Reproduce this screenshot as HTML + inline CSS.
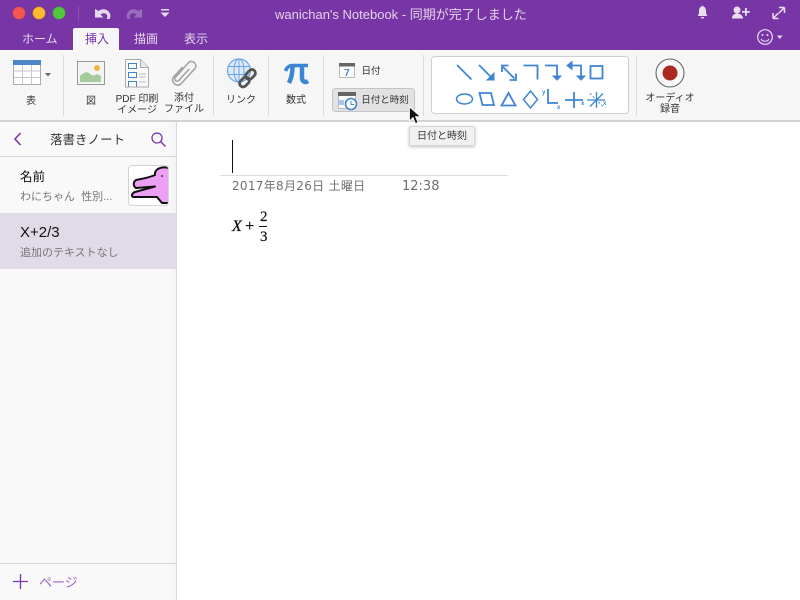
<!DOCTYPE html>
<html><head><meta charset="utf-8"><style>
html,body{margin:0;padding:0;width:800px;height:600px;overflow:hidden;background:#fff;font-family:"Liberation Sans","Noto Sans CJK JP",sans-serif}
.a{position:absolute;white-space:nowrap}
.c{position:absolute;text-align:center;font-size:10px;line-height:12px;color:#333;white-space:nowrap;transform:translateX(-50%)}
.sep{position:absolute;top:55px;height:61px;width:1px;background:#dcdcdc}
.tab{position:absolute;top:31px;font-size:12px;color:#e6d8ee;line-height:16px}
</style></head><body>
<div class="a" style="left:0;top:0;width:800px;height:50px;background:#7735a5"></div>
<div class="a" style="left:0;top:50px;width:800px;height:70px;background:#f6f6f6;border-bottom:2px solid #d2d2d2"></div>
<!-- traffic -->
<div class="a" style="left:13px;top:7px;width:12px;height:12px;border-radius:50%;background:#f4574f;box-shadow:0 0 0 .5px #b53a6a"></div>
<div class="a" style="left:33px;top:7px;width:12px;height:12px;border-radius:50%;background:#fbbb2d;box-shadow:0 0 0 .5px #b5703a"></div>
<div class="a" style="left:53px;top:7px;width:12px;height:12px;border-radius:50%;background:#4fc83a;box-shadow:0 0 0 .5px #4a8a50"></div>
<div class="a" style="left:78px;top:6px;width:1px;height:15px;background:#8a50b3"></div>
<svg class="a" style="left:90px;top:4px" width="90" height="20" viewBox="0 0 90 20">
<path d="M5 5v8.500h8.500l-3-3c2.500-2 5.500-1.500 6.500 .5 .5 1.500 .5 2.500-.5 4h3c1.500-2.500 1-6-1.500-8-3-2.500-7-2-9.500 0z" fill="#e6d8ee"/>
<path d="M52 5v8.500h-8.500l3-3c-2.500-2-5.500-1.500-6.500 .5-.5 1.500-.5 2.500 .5 4h-3c-1.500-2.500-1-6 1.500-8 3-2.500 7-2 9.500 0z" fill="#9a6cbd"/>
<path d="M71 5h8v1.500h-8zM70.500 8.500h9l-4.500 4.500z" fill="#e6d8ee"/>
</svg>
<div class="a" style="left:275px;top:7px;font-size:13px;line-height:16px;color:#e3d3ec">wanichan's Notebook - 同期が完了しました</div>
<!-- right icons -->
<svg class="a" style="left:690px;top:0" width="100" height="50" viewBox="0 0 100 50" fill="#e9deef">
<path d="M7.500 16c1-1 1.500-2 1.500-5 0-2.500 1-4 2.500-4.500.2-1 1.800-1 2 0 1.500.5 2.500 2 2.500 4.500 0 3 .5 4 1.500 5z"/><rect x="11" y="17" width="3" height="1.500" rx=".7"/>
<circle cx="47" cy="10" r="3.500"/><path d="M42 18.500c0-3 2-5 5-5s6 2 6 5z"/><path d="M52 11h3V8h1.800v3h3v1.800h-3v3H55v-3h-3z"/>
<path d="M94.500 7.500h-5.500M94.500 7.500v5.500M94.500 7.500l-5.500 5.500M83 18.500h5.500M83 18.500v-5.500M83 18.500l5.500-5.500" stroke="#e9deef" stroke-width="1.500" fill="none"/>
<circle cx="75" cy="37" r="7.300" fill="none" stroke="#e9deef" stroke-width="1.200"/><circle cx="72.500" cy="35" r="1"/><circle cx="77.500" cy="35" r="1"/><path d="M71 39c1.500 3 6.500 3 8 0" fill="none" stroke="#e9deef" stroke-width="1.100"/>
<path d="M87 35.500h5.500l-2.750 3.500z"/>
</svg>
<!-- tabs -->
<div class="a" style="left:73px;top:28px;width:46px;height:22px;background:#f6f6f6;border-radius:2px 2px 0 0"></div>
<div class="tab" style="left:22px">ホーム</div>
<div class="tab" style="left:85px;color:#7735a5">挿入</div>
<div class="tab" style="left:134px">描画</div>
<div class="tab" style="left:184px">表示</div>
<!-- separators -->
<div class="sep" style="left:63px"></div><div class="sep" style="left:213px"></div><div class="sep" style="left:268px"></div><div class="sep" style="left:323px"></div><div class="sep" style="left:423px"></div><div class="sep" style="left:636px"></div>
<!-- ribbon icons -->
<svg class="a" style="left:0;top:50px" width="800" height="70" viewBox="0 0 800 70">
<!-- table -->
<rect x="13.500" y="10.500" width="27" height="24" fill="#fff" stroke="#aaa"/><rect x="13" y="10" width="28" height="5" fill="#4a86c8"/>
<path d="M22.500 15v19M31.500 15v19M14 21h26M14 27.500h26" stroke="#c8c8c8" fill="none"/><path d="M45 23h6l-3 3.500z" fill="#666"/>
<!-- picture -->
<rect x="77.500" y="11.500" width="27" height="23" fill="#f4f4f4" stroke="#999"/><path d="M80 32v-6c3-3 6-5 9-3 3 3 6 3 8 1l4 2v6z" fill="#a4cb9b"/><circle cx="97" cy="18" r="3" fill="#edb940"/>
<!-- pdf -->
<path d="M125.500 9.500h15l8 8v19.500h-23z" fill="#fafafa" stroke="#aaa"/><path d="M140.500 9.500v8h8" fill="#e8e8e8" stroke="#aaa"/>
<path d="M128.500 13.500h8v5h-8zM128.500 22.500h8v5h-8zM128.500 36.500v-5h8v5" fill="#fff" stroke="#3f85d0"/>
<path d="M139 24h7M139 27h7M139 32h7" stroke="#bbb"/>
<!-- clip -->
<g fill="none" stroke="#a4a4a4" stroke-width="2" transform="translate(184 23) rotate(42) scale(.78) translate(-184.500 -20.500)"><path d="M178 16v17c0 8 13 8 13 0V7c0-7-11-7-11 0v25c0 4 6 4 6 0V12"/></g>
<!-- link -->
<circle cx="239" cy="20.500" r="11.500" fill="#dbe9fa" stroke="#6aa6e2" stroke-width="1.200"/><ellipse cx="239" cy="20.500" rx="5" ry="11.500" fill="none" stroke="#6aa6e2"/><path d="M228 16.500h22M228 24.500h22M239 9v23" stroke="#6aa6e2" fill="none"/>
<g fill="none" stroke="#555" stroke-width="2.800"><rect x="247" y="19" width="7" height="11" rx="3.500" transform="rotate(45 250.500 24.500)"/><rect x="241" y="26.500" width="7" height="11" rx="3.500" transform="rotate(45 244.500 32)"/></g>
<!-- pi -->
<g fill="none" stroke="#3c86d2"><path d="M285.500 21c1.500-4 3.500-5.500 7-5.500h15.500" stroke-width="3.600"/><path d="M292.500 16c0 7-1 12-3.500 17" stroke-width="4.500"/><path d="M302 16v11c0 5 3 6 6 4" stroke-width="4.500"/></g>
<!-- date -->
<rect x="339.500" y="13.500" width="15" height="14" fill="#fafafa" stroke="#bbb"/><rect x="339" y="13" width="16" height="3.500" fill="#666"/>
<text x="347" y="26" text-anchor="middle" font-size="10" font-weight="bold" fill="#4a86c8">7</text>
<rect x="332.500" y="38.500" width="82" height="23" rx="3" fill="#e2e2e2" stroke="#c4c4c4"/>
<rect x="338.500" y="43.500" width="17" height="15" fill="#fafafa" stroke="#bbb"/><rect x="338" y="42" width="18" height="4" fill="#666"/><rect x="339" y="50" width="5" height="5" fill="#a8c8ea"/>
<circle cx="351" cy="54" r="5.500" fill="#fff" stroke="#3f85d0" stroke-width="1.600"/><path d="M351 51v3.500h3" fill="none" stroke="#3f85d0"/>
<!-- shapes box -->
<rect x="431.500" y="6.500" width="197" height="57" rx="3" fill="#fff" stroke="#d0d0d0"/>
<g fill="none" stroke="#3f85d6" stroke-width="1.800">
<path d="M457 15l14.500 14.500"/>
<path d="M479 15l13.500 13.500"/>
<path d="M494 23v7h-7z" fill="#3f85d6" stroke-width="1"/>
<path d="M503 17l11.500 11.500M502 22v-6.500h6.500M516 23.500v6.500h-6.500"/>
<path d="M523.500 15.500h14v14"/>
<path d="M545 15.500h12v11"/>
<path d="M553 26h8l-4 4z" fill="#3f85d6" stroke-width="1"/>
<path d="M571 15.500h10v11"/>
<path d="M577 26h8l-4 4z" fill="#3f85d6" stroke-width="1"/>
<path d="M572 11.500v8l-5-4z" fill="#3f85d6" stroke-width="1"/>
<rect x="590.500" y="16" width="12" height="12.500"/>
<ellipse cx="464.500" cy="49" rx="8" ry="5" stroke-width="1.500"/>
<path d="M479.500 43h11.500l3 12h-11.500z"/>
<path d="M508.500 43l7 12.500h-14z"/>
<path d="M530.500 41l7 8.500-7 8.500-7-8.500z" stroke-width="1.500"/>
<path d="M548 39v14h10"/>
<path d="M565 50h18M574 42v16"/>
<path d="M587 50h18M596.500 42v16M590 56.500l13-13" stroke-width="1.300"/>
<path d="M590 43.500l13 13" stroke-width="1" stroke-dasharray="2 2"/>
</g>
<g font-size="6" font-weight="bold" fill="#3f85d6"><text x="542" y="44">y</text><text x="557" y="59">x</text><text x="581" y="55">x</text><text x="603" y="55">x</text></g>
<!-- record -->
<circle cx="670" cy="23" r="14" fill="#f8f8f8" stroke="#666" stroke-width="1.100"/><circle cx="670" cy="23" r="7.500" fill="#a92a20"/>
</svg>
<div class="c" style="left:31px;top:96px">表</div>
<div class="c" style="left:91px;top:96px">図</div>
<div class="c" style="left:137px;top:94px;line-height:11px">PDF 印刷<br>イメージ</div>
<div class="c" style="left:184px;top:93px;line-height:11px">添付<br>ファイル</div>
<div class="c" style="left:241px;top:95px">リンク</div>
<div class="c" style="left:296px;top:95px">数式</div>
<div class="c" style="left:371px;top:66px;font-size:9.500px">日付</div>
<div class="c" style="left:385px;top:95px;font-size:9.500px">日付と時刻</div>
<div class="c" style="left:670px;top:93px;line-height:11px">オーディオ<br>録音</div>
<!-- sidebar -->
<div class="a" style="left:0;top:122px;width:176px;height:478px;background:linear-gradient(90deg,#f9f9f9 168px,#f3f3f3 176px);border-right:1px solid #d8d8d8"></div>
<div class="a" style="left:0;top:156px;width:176px;height:1px;background:#d4d4d4"></div>
<svg class="a" style="left:10px;top:128px" width="165" height="24" viewBox="0 0 165 24" fill="none" stroke="#7b35ab">
<path d="M10.500 5l-5.500 6 5.500 6" stroke-width="1.600"/><circle cx="147" cy="10" r="5" stroke-width="1.300"/><path d="M150.500 13.500l5 5" stroke-width="1.500"/>
</svg>
<div class="a" style="left:50px;top:132px;font-size:12.500px;line-height:16px;color:#333">落書きノート</div>
<div class="a" style="left:20px;top:168px;font-size:12.500px;line-height:18px;color:#111">名前</div>
<div class="a" style="left:20px;top:190px;font-size:11px;line-height:15px;color:#777">わにちゃん&nbsp; 性別...</div>
<div class="a" style="left:128px;top:165px;width:39px;height:39px;background:#fff;border:1px solid #d4d4d4;border-radius:4px;overflow:hidden">
<svg width="39" height="39" viewBox="129 166 39 39" style="display:block"><path d="M170 168.500C163 166 156 168 155 173L155 175C148 178 141 179 136 180C133 182 133 186 136 188L155 186.500L135 192C132 193 131 196 133 197L157 197L162 203L170 203Z" fill="#eda0f3" stroke="#111" stroke-width="2" stroke-linejoin="round"/><circle cx="162" cy="176" r=".9" fill="#111"/></svg></div>
<div class="a" style="left:0;top:213px;width:176px;height:56px;background:#e1dae7"></div>
<div class="a" style="left:20px;top:224px;font-size:15px;line-height:18px;color:#111">X+2/3</div>
<div class="a" style="left:20px;top:246px;font-size:11px;line-height:15px;color:#777">追加のテキストなし</div>
<div class="a" style="left:0;top:563px;width:176px;height:1px;background:#d4d4d4"></div>
<svg class="a" style="left:12px;top:573px" width="18" height="18"><path d="M8.500 1v15M1 8.500h15" stroke="#7b35ab" stroke-width="1.300"/></svg>
<div class="a" style="left:39px;top:575px;font-size:13px;line-height:16px;color:#9f5fcb">ページ</div>
<!-- note -->
<div class="a" style="left:232px;top:140px;width:1px;height:33px;background:#111"></div>
<div class="a" style="left:220px;top:175px;width:288px;height:1px;background:#dedede"></div>
<div class="a" style="left:232px;top:179px;font-family:'DejaVu Sans','Noto Sans CJK JP',sans-serif;font-size:12px;letter-spacing:.3px;line-height:15px;color:#707070">2017年8月26日 土曜日</div>
<div class="a" style="left:402px;top:179px;font-family:'DejaVu Sans',sans-serif;font-size:13px;line-height:15px;color:#707070">12:38</div>
<div class="a" style="left:232px;top:218px;font-family:'Liberation Serif',serif;font-style:italic;font-size:16px;line-height:18px;color:#111;-webkit-text-stroke:.3px #111">X</div>
<div class="a" style="left:245px;top:218px;font-family:'Liberation Sans',sans-serif;font-size:16px;line-height:18px;color:#111">+</div>
<div class="a" style="left:260px;top:209px;font-family:'Liberation Serif',serif;font-size:15px;line-height:17px;color:#111;-webkit-text-stroke:.2px #111">2</div>
<div class="a" style="left:259px;top:226px;width:8px;height:1px;background:#111"></div>
<div class="a" style="left:260px;top:229px;font-family:'Liberation Serif',serif;font-size:15px;line-height:17px;color:#111;-webkit-text-stroke:.2px #111">3</div>
<!-- tooltip -->
<div class="a" style="left:409px;top:126px;width:64px;height:18px;background:#f1f1f1;border:1px solid #d8d8d8;border-radius:2px;box-shadow:0 1px 3px rgba(0,0,0,.25);font-size:10px;line-height:19px;text-align:center;color:#333">日付と時刻</div>
<!-- cursor -->
<svg class="a" style="left:408px;top:106px" width="14" height="20" viewBox="0 0 14 20"><path d="M1.500 1v14l3.500-3.500 2.500 6 2.500-1-2.500-5.800h5z" fill="#111" stroke="#fff" stroke-width=".8"/></svg>
</body></html>
